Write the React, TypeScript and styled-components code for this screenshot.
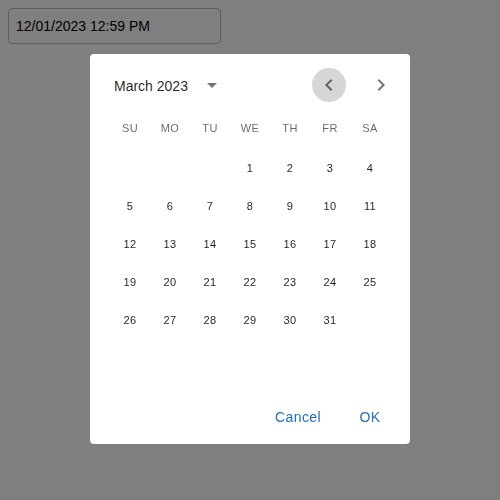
import React from "react";
import styled, { createGlobalStyle } from "styled-components";

const Global = createGlobalStyle`
  html, body { margin: 0; padding: 0; background: #ffffff; }
  body { padding: 8px; font-family: "Liberation Sans", Arial, sans-serif; }
  * { box-sizing: border-box; }
`;

const Field = styled.div`
  width: 213px;
  height: 36px;
  border: 1px solid #bdbdbd;
  border-radius: 4px;
  display: flex;
  align-items: center;
  padding: 0 7px;
  font-family: "Liberation Sans", Arial, sans-serif;
  font-size: 14px;
  color: #000;
  background: #fff;
`;

const Backdrop = styled.div`
  position: fixed;
  inset: 0;
  padding-bottom: 2px;
  background: rgba(0, 0, 0, 0.5);
  display: flex;
  align-items: center;
  justify-content: center;
`;

const Dialog = styled.div`
  width: 320px;
  background: #fff;
  border-radius: 4px;
  display: flex;
  flex-direction: column;
  font-family: "Liberation Sans", Arial, sans-serif;
`;

const Header = styled.div`
  display: flex;
  align-items: center;
  margin-top: 16px;
  margin-bottom: 8px;
  padding: 0 12px 0 24px;
  height: 30px;
`;

const Label = styled.div`
  font-size: 14px;
  font-weight: 400;
  color: rgba(0, 0, 0, 0.87);
  margin-right: 7px;
  padding-top: 2px;
`;

const IconBtn = styled.div<{ $size: number; $active?: boolean }>`
  width: ${(p) => p.$size}px;
  height: ${(p) => p.$size}px;
  border-radius: 50%;
  display: flex;
  align-items: center;
  justify-content: center;
  background: ${(p) => (p.$active ? "rgba(0,0,0,0.16)" : "transparent")};
  color: rgba(0, 0, 0, 0.54);
  flex-shrink: 0;
`;

const Spacer = styled.div`
  flex: 1;
`;

const Gap = styled.div`
  width: 18px;
`;

const Grid = styled.div`
  width: 280px;
  margin: 0 auto;
  display: grid;
  grid-template-columns: repeat(7, 40px);
`;

const WeekLabel = styled.div`
  height: 40px;
  display: flex;
  align-items: center;
  justify-content: center;
  font-size: 11px;
  color: rgba(0, 0, 0, 0.6);
  letter-spacing: 0.4px;
`;

const Month = styled.div`
  min-height: 243px;
  padding-top: 1px;
`;

const Day = styled.div`
  height: 38px;
  display: flex;
  align-items: center;
  justify-content: center;
  font-size: 11px;
  color: rgba(0, 0, 0, 0.87);
  letter-spacing: 0.3px;
`;

const Actions = styled.div`
  display: flex;
  justify-content: flex-end;
  padding: 8px 8px 9px;
  gap: 8px;
`;

const TextButton = styled.div`
  min-width: 64px;
  height: 36px;
  padding: 0 8px;
  display: flex;
  align-items: center;
  justify-content: center;
  font-size: 14px;
  font-weight: 400;
  letter-spacing: 0.4px;
  color: #1f6fc0;
  border-radius: 4px;
`;

const Svg = ({ d }: { d: string }) => (
  <svg width="24" height="24" viewBox="0 0 24 24" fill="currentColor">
    <path d={d} />
  </svg>
);

const weekdays = ["SU", "MO", "TU", "WE", "TH", "FR", "SA"];
const days: (number | null)[] = [null, null, null];
for (let i = 1; i <= 31; i++) days.push(i);

export default function App() {
  return (
    <>
      <Global />
      <Field>12/01/2023 12:59 PM</Field>
      <Backdrop>
        <Dialog>
          <Header>
            <Label>March 2023</Label>
            <IconBtn $size={34}>
              <Svg d="M7 10l5 5 5-5z" />
            </IconBtn>
            <Spacer />
            <IconBtn $size={34} $active>
              <Svg d="M15.41 16.59L10.83 12l4.58-4.59L14 6l-6 6 6 6 1.41-1.41z" />
            </IconBtn>
            <Gap />
            <IconBtn $size={34}>
              <Svg d="M8.59 16.59L13.17 12 8.59 7.41 10 6l6 6-6 6-1.41-1.41z" />
            </IconBtn>
          </Header>
          <Grid>
            {weekdays.map((w) => (
              <WeekLabel key={w}>{w}</WeekLabel>
            ))}
          </Grid>
          <Month>
            <Grid>
              {days.map((d, i) => (
                <Day key={i}>{d ?? ""}</Day>
              ))}
            </Grid>
          </Month>
          <Actions>
            <TextButton>Cancel</TextButton>
            <TextButton>OK</TextButton>
          </Actions>
        </Dialog>
      </Backdrop>
    </>
  );
}
